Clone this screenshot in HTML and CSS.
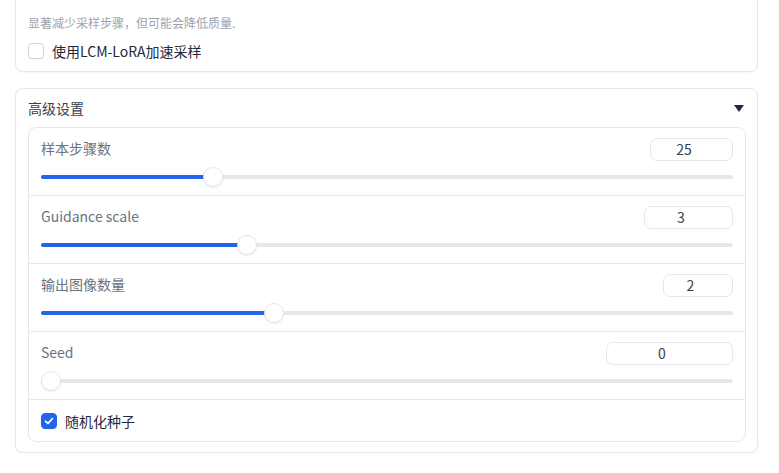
FILE: index.html
```html
<!DOCTYPE html>
<html lang="zh">
<head>
<meta charset="utf-8">
<title>设置</title>
<link rel="stylesheet" href="styles.css">
</head>
<body>
<div class="page">
  <section class="card card-top">
    <p class="info">显著减少采样步骤，但可能会降低质量.</p>
    <label class="check-row">
      <span class="box"></span>
      <span class="check-label">使用LCM-LoRA加速采样</span>
    </label>
  </section>

  <section class="card card-adv">
    <div class="adv-head">
      <span class="adv-title">高级设置</span>
      <span class="caret"></span>
    </div>
    <div class="block">
      <div class="row">
        <div class="row-top">
          <span class="label">样本步骤数</span>
          <span class="num num-steps">25</span>
        </div>
        <div class="slider" style="--p: 0.2414">
          <div class="track"></div>
          <div class="fill"></div>
          <div class="thumb"></div>
        </div>
      </div>
      <div class="row">
        <div class="row-top">
          <span class="label">Guidance scale</span>
          <span class="num num-guidance">3</span>
        </div>
        <div class="slider" style="--p: 0.2921">
          <div class="track"></div>
          <div class="fill"></div>
          <div class="thumb"></div>
        </div>
      </div>
      <div class="row">
        <div class="row-top">
          <span class="label">输出图像数量</span>
          <span class="num num-count">2</span>
        </div>
        <div class="slider" style="--p: 0.3323">
          <div class="track"></div>
          <div class="fill"></div>
          <div class="thumb"></div>
        </div>
      </div>
      <div class="row">
        <div class="row-top">
          <span class="label">Seed</span>
          <span class="num num-seed">0</span>
        </div>
        <div class="slider" style="--p: 0">
          <div class="track"></div>
          <div class="fill"></div>
          <div class="thumb"></div>
        </div>
      </div>
      <label class="row row-check">
        <span class="box box-on">
          <svg viewBox="0 0 16 16" width="16" height="16"><path d="M4.2 8.3 L6.8 10.8 L11.8 5.4" fill="none" stroke="#fff" stroke-width="2" stroke-linecap="round" stroke-linejoin="round"/></svg>
        </span>
        <span class="check-label">随机化种子</span>
      </label>
    </div>
  </section>
</div>
</body>
</html>
```

FILE: styles.css
```css
* { box-sizing: border-box; }

html, body {
  margin: 0;
  padding: 0;
  background: #ffffff;
  overflow: hidden;
}

body {
  font-family: "Noto Sans CJK SC", "Noto Sans", sans-serif;
  font-size: 14px;
  color: #1f2937;
}

.page {
  width: 743px;
  margin-left: 15px;
  display: flex;
  flex-direction: column;
  gap: 16px;
}

.card {
  background: #fff;
  border: 1px solid #e5e7eb;
  border-radius: 8px;
  box-shadow: 0 1px 2px rgba(0, 0, 0, 0.04);
}

.card-top {
  margin-top: -10px;
  height: 82px;
  padding: 23px 12px 0 12px;
}

.info {
  margin: 0;
  font-size: 12px;
  line-height: 18px;
  color: #9ca3af;
}

.check-row {
  margin-top: 9px;
  display: flex;
  align-items: center;
  gap: 8px;
  height: 20px;
}

.box {
  width: 16px;
  height: 16px;
  border: 1px solid #d1d5db;
  border-radius: 4px;
  background: #fff;
  box-shadow: 0 1px 2px rgba(0, 0, 0, 0.05);
  flex: none;
  display: flex;
  align-items: center;
  justify-content: center;
}

.box-on {
  background: #2563eb;
  border-color: #2563eb;
}

.box-on svg { display: block; }

.check-label {
  font-size: 14px;
  line-height: 20px;
  color: #1f2937;
}

.card-adv {
  padding: 0 11px 10px 12px;
}

.adv-head {
  display: flex;
  align-items: center;
  justify-content: space-between;
  padding: 9px 2px 9px 0;
  height: 38px;
}

.adv-title {
  font-size: 14px;
  line-height: 20px;
  color: #374151;
}

.caret {
  width: 0;
  height: 0;
  border-left: 5px solid transparent;
  border-right: 5px solid transparent;
  border-top: 7px solid #1e293b;
  margin-top: 1px;
}

.block {
  border: 1px solid #e5e7eb;
  border-radius: 8px;
  display: flex;
  flex-direction: column;
}

.row {
  padding: 10px 12px 8px 12px;
  height: 67px;
}

.row + .row {
  border-top: 1px solid #e5e7eb;
  height: 68px;
}

.row-top {
  display: flex;
  justify-content: space-between;
  align-items: center;
  height: 23px;
}

.label {
  font-size: 14px;
  line-height: 20px;
  color: #6b7280;
  margin-top: -3px;
}

.num {
  height: 23px;
  border: 1px solid #e5e7eb;
  border-radius: 7px;
  font-size: 14px;
  line-height: 21px;
  color: #374151;
  text-align: center;
  padding-right: 15px;
  background: #fff;
}

.num-steps { width: 83px; }
.num-guidance { width: 89px; }
.num-count { width: 70px; }
.num-seed { width: 127px; }

.slider {
  position: relative;
  margin-top: 6px;
  height: 20px;
}

.track {
  position: absolute;
  left: 0;
  right: 0;
  top: 8px;
  height: 4px;
  border-radius: 2px;
  background: #e5e7eb;
}

.fill {
  position: absolute;
  left: 0;
  top: 8px;
  height: 4px;
  border-radius: 2px;
  background: #2563eb;
  width: calc((100% - 20px) * var(--p) + 10px);
}

.thumb {
  position: absolute;
  top: 0;
  left: calc((100% - 20px) * var(--p));
  width: 20px;
  height: 20px;
  border-radius: 50%;
  background: #fff;
  border: 1px solid #e5e7eb;
  box-shadow: 0 1px 2px rgba(0, 0, 0, 0.08);
}

.row-check {
  display: flex;
  align-items: center;
  gap: 8px;
  padding: 12px 12px 12px 12px;
  height: 42px;
}

.row + .row-check { height: 42px; }
```
